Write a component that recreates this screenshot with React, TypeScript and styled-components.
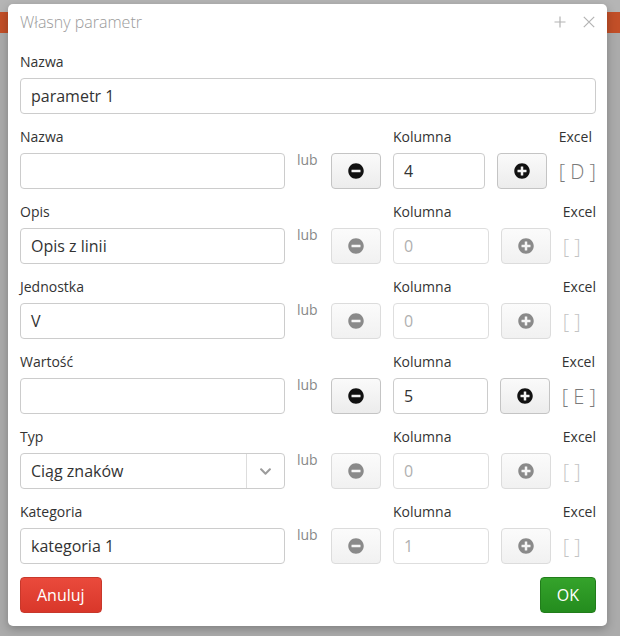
import React from "react";
import styled, { createGlobalStyle } from "styled-components";
import { FaMinusCircle, FaPlusCircle, FaChevronDown } from "react-icons/fa";

const GlobalStyle = createGlobalStyle`
  html, body { margin: 0; padding: 0; }
  body {
    background: #ababab;
    font-family: "Open Sans", "Noto Sans", sans-serif;
    color: #333;
  }
  * { box-sizing: border-box; }
`;

const Page = styled.div`
  position: relative;
  width: 620px;
  height: 636px;
  overflow: hidden;
`;

const TopStrip = styled.div`
  height: 12px;
  background: #b5b5b5;
`;

const OrangeBar = styled.div`
  height: 21px;
  background: #c24f28;
`;

const Modal = styled.div`
  position: absolute;
  top: 4px;
  left: 8px;
  width: 599px;
  height: 622px;
  background: #fff;
  border-radius: 5px;
  box-shadow: 0 3px 10px rgba(0, 0, 0, 0.25);
  display: flex;
  flex-direction: column;
`;

const Header = styled.div`
  height: 36px;
  padding: 0 12px;
  display: flex;
  align-items: center;
  justify-content: space-between;
`;

const Title = styled.div`
  font-size: 16px;
  font-weight: 300;
  color: #9a9a9a;
`;

const HeaderActions = styled.div`
  display: flex;
  gap: 17px;
  align-items: center;
  color: #b0b0b0;
  padding-right: 0px;
`;

const HeaderIcon = styled.svg`
  width: 12px;
  height: 12px;
  stroke: #b3b3b3;
  stroke-width: 1.2;
  fill: none;
`;

const Body = styled.div`
  padding: 12px 11px 0 12px;
  display: flex;
  flex-direction: column;
`;

const Label = styled.div`
  font-size: 14px;
  line-height: 20px;
  height: 20px;
  color: #333;
  white-space: nowrap;
`;

const Group = styled.div<{ $w?: number; $grow?: boolean }>`
  display: flex;
  flex-direction: column;
  gap: 6px;
  ${(p) => (p.$w ? `width: ${p.$w}px; flex: none;` : "")}
  ${(p) => (p.$grow ? "flex: 1 1 0; min-width: 0;" : "")}
`;

const TextInput = styled.div<{ $disabled?: boolean }>`
  height: 36px;
  border: 1px solid ${(p) => (p.$disabled ? "#dedede" : "#cccccc")};
  border-radius: 4px;
  padding: 0 10px;
  display: flex;
  align-items: center;
  font-size: 16px;
  color: ${(p) => (p.$disabled ? "#b0b0b0" : "#333")};
  background: #fff;
  white-space: nowrap;
`;

const SelectBox = styled.div`
  height: 36px;
  border: 1px solid #cccccc;
  border-radius: 4px;
  display: flex;
  align-items: stretch;
  font-size: 16px;
  color: #333;
`;

const SelectValue = styled.div`
  flex: 1;
  padding: 0 10px;
  display: flex;
  align-items: center;
`;

const SelectArrow = styled.div`
  width: 38px;
  border-left: 1px solid #dddddd;
  display: flex;
  align-items: center;
  justify-content: center;
  color: #9c9c9c;
`;

const Row = styled.div`
  display: flex;
  column-gap: 12px;
  margin-top: 13px;
`;

const Lub = styled.div`
  font-size: 14px;
  line-height: 14px;
  color: #888;
  padding-top: 0px;
`;

const IconButton = styled.div<{ $disabled?: boolean }>`
  width: 50px;
  height: 36px;
  border-radius: 4px;
  border: 1px solid ${(p) => (p.$disabled ? "#dcdcdc" : "#c4c4c4")};
  background: ${(p) =>
    p.$disabled
      ? "linear-gradient(#fbfbfb, #f1f1f1)"
      : "linear-gradient(#fafafa, #ececec)"};
  display: flex;
  align-items: center;
  justify-content: center;
  color: ${(p) => (p.$disabled ? "#8a8a8a" : "#111")};
  font-size: 16px;
`;

const ExcelValue = styled.div<{ $disabled?: boolean }>`
  height: 36px;
  display: flex;
  align-items: center;
  font-size: 20px;
  font-weight: 300;
  color: ${(p) => (p.$disabled ? "#c4c4c4" : "#7a7a7a")};
  white-space: pre;
`;

const Footer = styled.div`
  margin-top: 13px;
  display: flex;
  justify-content: space-between;
`;

const ActionButton = styled.div<{ $variant: "danger" | "success" }>`
  height: 36px;
  padding: 0 16px;
  border-radius: 4px;
  display: flex;
  align-items: center;
  font-size: 16px;
  color: #fff;
  background: ${(p) =>
    p.$variant === "danger"
      ? "linear-gradient(#ea4a3c, #d9372a)"
      : "linear-gradient(#35a32b, #248c1e)"};
  border: 1px solid ${(p) => (p.$variant === "danger" ? "#c8382b" : "#217d1b")};
`;

type Param = {
  label: string;
  value: string;
  column: string;
  excel: string;
  active: boolean;
  select?: boolean;
};

const params: Param[] = [
  { label: "Nazwa", value: "", column: "4", excel: "[ D ]", active: true },
  { label: "Opis", value: "Opis z linii", column: "0", excel: "[ ]", active: false },
  { label: "Jednostka", value: "V", column: "0", excel: "[ ]", active: false },
  { label: "Wartość", value: "", column: "5", excel: "[ E ]", active: true },
  { label: "Typ", value: "Ciąg znaków", column: "0", excel: "[ ]", active: false, select: true },
  { label: "Kategoria", value: "kategoria 1", column: "1", excel: "[ ]", active: false },
];

function ParamRow({ p }: { p: Param }) {
  const dis = !p.active;
  return (
    <Row>
      <Group $w={265}>
        <Label>{p.label}</Label>
        {p.select ? (
          <SelectBox>
            <SelectValue>{p.value}</SelectValue>
            <SelectArrow>
              <FaChevronDown size={13} />
            </SelectArrow>
          </SelectBox>
        ) : (
          <TextInput>{p.value}</TextInput>
        )}
      </Group>
      <Group $w={22}>
        <Label />
        <Lub>lub</Lub>
      </Group>
      <Group $w={50}>
        <Label />
        <IconButton $disabled={dis}>
          <FaMinusCircle />
        </IconButton>
      </Group>
      <Group $grow>
        <Label>Kolumna</Label>
        <TextInput $disabled={dis}>{p.column}</TextInput>
      </Group>
      <Group $w={50}>
        <Label />
        <IconButton $disabled={dis}>
          <FaPlusCircle />
        </IconButton>
      </Group>
      <Group>
        <Label>Excel</Label>
        <ExcelValue $disabled={dis}>{p.excel}</ExcelValue>
      </Group>
    </Row>
  );
}

export default function App() {
  return (
    <Page>
      <GlobalStyle />
      <TopStrip />
      <OrangeBar />
      <Modal>
        <Header>
          <Title>Własny parametr</Title>
          <HeaderActions>
            <HeaderIcon viewBox="0 0 12 12">
              <path d="M6 0.5 V11.5 M0.5 6 H11.5" />
            </HeaderIcon>
            <HeaderIcon viewBox="0 0 12 12">
              <path d="M0.8 0.8 L11.2 11.2 M11.2 0.8 L0.8 11.2" />
            </HeaderIcon>
          </HeaderActions>
        </Header>
        <Body>
          <Group>
            <Label>Nazwa</Label>
            <TextInput>parametr 1</TextInput>
          </Group>
          {params.map((p, i) => (
            <ParamRow key={i} p={p} />
          ))}
          <Footer>
            <ActionButton $variant="danger">Anuluj</ActionButton>
            <ActionButton $variant="success">OK</ActionButton>
          </Footer>
        </Body>
      </Modal>
    </Page>
  );
}
